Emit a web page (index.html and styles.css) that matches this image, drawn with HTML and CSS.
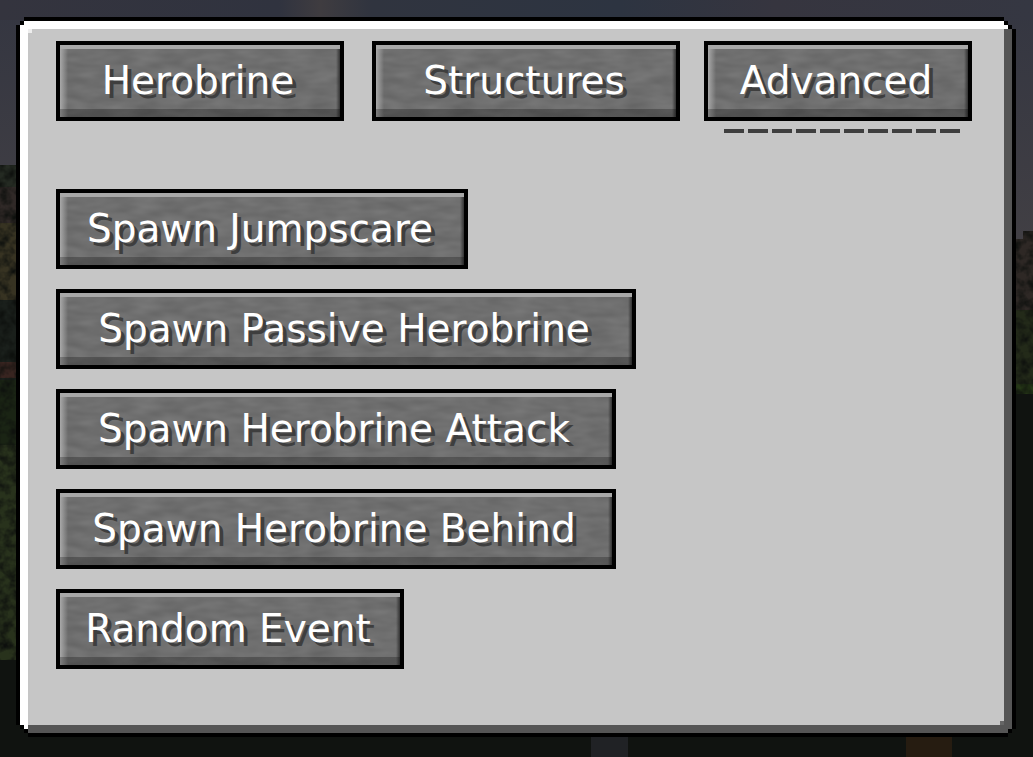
FILE: index.html
```
<!DOCTYPE html>
<html lang="en">
<head>
    <meta charset="UTF-8">
    <meta name="viewport" content="width=device-width, initial-scale=1.0">
    <title>Herobrine Menu</title>
    <link rel="stylesheet" href="styles.css">
</head>
<body>
    <svg class="scene" viewBox="0 0 1033 757" preserveAspectRatio="none" aria-hidden="true">
        <defs>
            <linearGradient id="sky" x1="0" y1="0" x2="0" y2="1">
                <stop offset="0" stop-color="#343641"/>
                <stop offset="1" stop-color="#413f44"/>
            </linearGradient>
            <linearGradient id="skyTop" x1="0" y1="0" x2="1" y2="0">
                <stop offset="0" stop-color="#34343e"/>
                <stop offset="0.27" stop-color="#30333f"/>
                <stop offset="0.31" stop-color="#3f3c40"/>
                <stop offset="0.36" stop-color="#30343f"/>
                <stop offset="0.6" stop-color="#2d3441"/>
                <stop offset="0.75" stop-color="#36353f"/>
                <stop offset="1" stop-color="#353742"/>
            </linearGradient>
            <!-- stone grain for the buttons -->
            <filter id="stone" x="0" y="0" width="100%" height="100%" color-interpolation-filters="sRGB">
                <feTurbulence type="fractalNoise" baseFrequency="0.04 0.12" numOctaves="2" seed="4"/>
                <feColorMatrix values="0.1 0 0 0 0.385  0.1 0 0 0 0.385  0.1 0 0 0 0.385  0 0 0 0 1"/>
            </filter>
            <filter id="leaves" x="0" y="0" width="100%" height="100%" color-interpolation-filters="sRGB">
                <feTurbulence type="fractalNoise" baseFrequency="0.1" numOctaves="3" seed="7" result="noise"/>
                <feColorMatrix in="noise" values="0 0 0 0 0.05  0 0 0 0 0.06  0 0 0 0 0.05  2 0 0 0 -0.7" result="dark"/>
                <feComposite in="dark" in2="SourceGraphic" operator="atop"/>
            </filter>
        </defs>
        <rect width="1033" height="757" fill="#101310"/>
        <rect width="1033" height="240" fill="url(#sky)"/>
        <rect width="1033" height="20" fill="url(#skyTop)"/>
        <g filter="url(#leaves)">
            <rect y="165" width="30" height="22" fill="#242a22"/>
            <rect y="187" width="30" height="36" fill="#302927"/>
            <rect y="223" width="30" height="77" fill="#373322"/>
            <rect y="300" width="30" height="80" fill="#1a1f1b"/>
            <rect y="362" width="30" height="16" fill="#382420"/>
            <rect y="380" width="30" height="65" fill="#1a2414"/>
            <rect y="445" width="30" height="215" fill="#28321c"/>
            <path d="M1000 239H1023V231H1033V320H1000Z" fill="#2e2825"/>
            <rect x="1000" y="310" width="33" height="75" fill="#232a19"/>
            <rect x="1000" y="384" width="33" height="10" fill="#253716"/>
        </g>
        <rect x="1000" y="394" width="33" height="363" fill="#101310"/>
        <rect x="591" y="737" width="37" height="20" fill="#202225"/>
        <rect x="906" y="737" width="46" height="20" fill="#261c11"/>
    </svg>

    <main class="page">
        <div class="panel">
            <div class="panel-body">
                <nav class="tabs">
                    <button type="button" class="stone-button tab-herobrine"><span>Herobrine</span></button>
                    <button type="button" class="stone-button tab-structures"><span>Structures</span></button>
                    <div class="tab-active">
                        <button type="button" class="stone-button tab-advanced"><span>Advanced</span></button>
                        <div class="tab-underline"></div>
                    </div>
                </nav>
                <div class="actions">
                    <button type="button" class="stone-button jumpscare"><span>Spawn Jumpscare</span></button>
                    <button type="button" class="stone-button passive"><span>Spawn Passive Herobrine</span></button>
                    <button type="button" class="stone-button attack"><span>Spawn Herobrine Attack</span></button>
                    <button type="button" class="stone-button behind"><span>Spawn Herobrine Behind</span></button>
                    <button type="button" class="stone-button random"><span>Random Event</span></button>
                </div>
            </div>
        </div>
    </main>
</body>
</html>
```
FILE: styles.css
```
* {
    box-sizing: border-box;
}

body {
    margin: 0;
    background-color: #101310;
    font-family: "DejaVu Sans", sans-serif;
}

.scene {
    position: absolute;
    top: 0;
    left: 0;
    width: 100%;
    height: 100%;
}

.page {
    position: relative;
    display: flex;
    min-height: 100vh;
    padding: 17px 17px 20px 16px;
}

/* black outline with stepped pixel corners */
.panel {
    display: flex;
    flex: 1;
    padding: 4px;
    background-color: #000000;
    clip-path: polygon(
        0 8px, 4px 8px, 4px 4px, 8px 4px, 8px 0,
        calc(100% - 12px) 0, calc(100% - 12px) 4px, calc(100% - 8px) 4px, calc(100% - 8px) 8px,
        calc(100% - 4px) 8px, calc(100% - 4px) 12px, 100% 12px,
        100% calc(100% - 8px), calc(100% - 4px) calc(100% - 8px), calc(100% - 4px) calc(100% - 4px),
        calc(100% - 8px) calc(100% - 4px), calc(100% - 8px) 100%,
        12px 100%, 12px calc(100% - 4px), 8px calc(100% - 4px), 8px calc(100% - 8px),
        4px calc(100% - 8px), 4px calc(100% - 12px), 0 calc(100% - 12px)
    );
}

.panel-body {
    position: relative;
    flex: 1;
    padding: 20px 36px;
    background-color: #c6c6c6;
    box-shadow: inset 8px 8px #ffffff, inset -8px -8px #555555;
    clip-path: polygon(
        0 4px, 4px 4px, 4px 0,
        calc(100% - 8px) 0, calc(100% - 8px) 4px, calc(100% - 4px) 4px, calc(100% - 4px) 8px, 100% 8px,
        100% calc(100% - 4px), calc(100% - 4px) calc(100% - 4px), calc(100% - 4px) 100%,
        8px 100%, 8px calc(100% - 4px), 4px calc(100% - 4px), 4px calc(100% - 8px), 0 calc(100% - 8px)
    );
}

.panel-body::before,
.panel-body::after {
    content: "";
    position: absolute;
    width: 4px;
    height: 4px;
}

.panel-body::before {
    top: 8px;
    left: 8px;
    background-color: #eeeeee;
}

.panel-body::after {
    right: 8px;
    bottom: 8px;
    background-color: #666666;
}

.tabs {
    display: flex;
    align-items: flex-start;
}

.tab-structures {
    margin: 0 24px 0 28px;
}

.tab-underline {
    height: 4px;
    margin: 8px 12px 0 20px;
    background: repeating-linear-gradient(to right, #3e3e3e 0 20px, transparent 20px 24px);
}

.actions {
    display: flex;
    flex-direction: column;
    align-items: flex-start;
    gap: 20px;
    margin-top: 56px;
}

.stone-button {
    position: relative;
    height: 80px;
    padding: 0 4px 0 0;
    border: 4px solid #000000;
    background-color: #6f6f6f;
    color: #ffffff;
    font-family: inherit;
    font-size: 39px;
    line-height: 72px;
    text-shadow: 4px 4px #3e3e3e;
    white-space: nowrap;
    cursor: pointer;
}

.stone-button::before {
    content: "";
    position: absolute;
    inset: 0;
    filter: url(#stone);
}

/* bevel over the stone */
.stone-button::after {
    content: "";
    position: absolute;
    inset: 0;
    background:
        linear-gradient(#a8a8a8, #a8a8a8) top / 100% 4px no-repeat,
        linear-gradient(rgba(0, 0, 0, 0.25), rgba(0, 0, 0, 0.25)) bottom / 100% 8px no-repeat,
        linear-gradient(to right, #a8a8a8, rgba(168, 168, 168, 0)) left / 8px 100% no-repeat,
        linear-gradient(to left, #333333, rgba(51, 51, 51, 0)) right / 4px 100% no-repeat;
}

.stone-button span {
    position: relative;
    z-index: 1;
}

.stone-button:hover {
    color: #ffffa0;
}

.tab-herobrine {
    width: 288px;
}

.tab-structures {
    width: 308px;
}

.tab-advanced {
    width: 268px;
}

.jumpscare {
    width: 412px;
}

.passive {
    width: 580px;
}

.attack,
.behind {
    width: 560px;
}

.random {
    width: 348px;
}
```
